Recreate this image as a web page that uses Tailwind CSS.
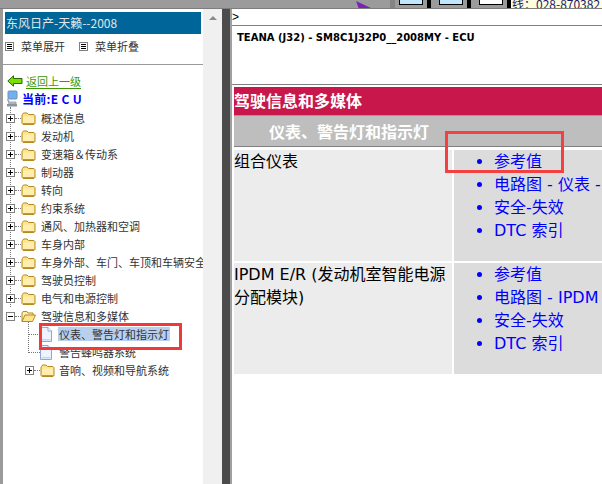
<!DOCTYPE html>
<html lang="zh-CN">
<head>
<meta charset="UTF-8">
<title>东风日产-天籁--2008</title>
<script src="https://cdn.jsdelivr.net/npm/@tailwindcss/browser@4"></script>
</head>
<body class="bg-white">
<svg class="hidden">
  <symbol id="folder" viewBox="0 0 15 13">
    <path d="M1.5 2.5 L2.5 1 H6 L7.5 2.5 H13 L14 3.5 V11.5 L13 12.5 H2 L1 11.5 V3 Z" fill="#ffe48a" stroke="#b58a22"/>
    <path d="M2 4.5 H13 V11 H2 Z" fill="#ffeeb0"/>
    <path d="M2 11.5 H13.5" stroke="#c8962a"/>
  </symbol>
  <symbol id="open" viewBox="0 0 15 13">
    <path d="M1 11.5 V3 L2 1.5 H6 L7 3 H12 V5" fill="#ffeeb0" stroke="#b58a22"/>
    <path d="M1 11.5 L4 5 H14.5 L11.5 11.5 Z" fill="#ffe48a" stroke="#b58a22"/>
  </symbol>
  <symbol id="doc" viewBox="0 0 12 15">
    <path d="M.5 .5 H8 L11.5 4 V14.5 H.5 Z" fill="#eef4ff" stroke="#8fa8d8"/>
    <path d="M8 .5 V4 H11.5" fill="#fff" stroke="#8fa8d8"/>
    <path d="M1.5 12 H10.5 V13.5 H1.5 Z" fill="#c4d6f4"/>
  </symbol>
  <symbol id="plus" viewBox="0 0 9 9">
    <rect x=".5" y=".5" width="8" height="8" fill="#fff" stroke="#808080"/>
    <path d="M2 4.5 H7 M4.5 2 V7" stroke="#000"/>
  </symbol>
  <symbol id="minus" viewBox="0 0 9 9">
    <rect x=".5" y=".5" width="8" height="8" fill="#fff" stroke="#808080"/>
    <path d="M2 4.5 H7" stroke="#000"/>
  </symbol>
  <symbol id="menu" viewBox="0 0 9 9">
    <rect x=".5" y=".5" width="8" height="8" fill="#fff" stroke="#808080"/>
    <path d="M2 2.5 H7 M2 4.5 H7 M2 6.5 H7" stroke="#000"/>
  </symbol>
</svg>

<div class="relative w-[602px] h-[484px] overflow-hidden flex flex-col font-['Noto_Sans_CJK_SC',sans-serif]">
  <!-- strip of the window behind -->
  <div class="h-[9px] shrink-0 bg-[#9b9b9b] border-b border-[#7d7d7d] flex overflow-hidden">
    <svg class="ml-[356px] mt-px w-[17px] h-[8px] shrink-0" viewBox="0 0 17 8"><path d="M0 0 L17 8 H3 Z" fill="#7a22b8"/></svg>
    <div class="ml-[17px] w-[5px] bg-[#848484] shrink-0"></div>
    <div class="ml-[4px] w-[24px] h-[5px] bg-[#bfe8ff] border-x border-b border-black shrink-0"></div>
    <div class="ml-[4px] w-[4px] bg-black shrink-0"></div>
    <div class="ml-[8px] w-[24px] h-[5px] bg-[#bfe8ff] border-x border-b border-black shrink-0"></div>
    <div class="ml-[4px] w-[4px] bg-black shrink-0"></div>
    <div class="ml-[8px] w-[24px] h-[5px] bg-white border-x border-b border-black shrink-0"></div>
    <div class="ml-[4px] w-[4px] bg-black shrink-0"></div>
    <div class="flex-1 bg-[#fffde0] text-[#1a1a6e] text-[12px] leading-[7px] whitespace-nowrap pl-px">线：028-870382</div>
  </div>

  <div class="flex flex-1 min-h-0">
    <div class="w-[3px] bg-[#9b9b9b] shrink-0"></div>

    <!-- left menu -->
    <div class="w-[200px] shrink-0 bg-white overflow-hidden text-[11px] text-[#333]">
      <div class="mt-[3px] ml-[2px] w-[196px] h-[22px] bg-[#006699] text-[#e4e4e4] text-[12px] leading-[22px] pl-px whitespace-nowrap">东风日产-天籁--2008</div>
      <div class="h-[31px] border-b border-[#999] flex items-center pl-[2px] pb-[6px]">
        <svg class="w-[9px] h-[9px] shrink-0"><use href="#menu"/></svg>
        <span class="ml-[7px] leading-none">菜单展开</span>
        <svg class="ml-[14px] w-[9px] h-[9px] shrink-0"><use href="#menu"/></svg>
        <span class="ml-[7px] leading-none">菜单折叠</span>
      </div>
      <div class="mt-[9px] h-[14px] flex items-center pl-[4px]">
        <svg class="w-[16px] h-[12px] shrink-0" viewBox="0 0 16 12"><path d="M.8 6 L6.5 .8 V3.5 H15 V8.5 H6.5 V11.2 Z" fill="#7be000" stroke="#2a6a00"/></svg>
        <span class="ml-[3px] text-[#3a9a00] underline underline-offset-2 leading-none">返回上一级</span>
      </div>
      <div class="mt-[2px] h-[17px] flex items-center pl-[3px]">
        <svg class="w-[12px] h-[17px] shrink-0" viewBox="0 0 12 17">
          <rect x="2" y="1" width="9" height="8" rx="1" fill="#6cb0f5" stroke="#7f8fa8"/>
          <path d="M1.5 9 L3.5 12 H10 V14 H3 Z" fill="#c4cad4" stroke="#7f8a98" stroke-width=".7"/>
          <rect x="1" y="14" width="10" height="2.5" fill="#8a93a0"/>
        </svg>
        <span class="ml-[4px] text-[12px] leading-none font-bold text-[#0000ff] tracking-[0.3px]">当前:E C U</span>
      </div>

      <!-- tree -->
      <div class="relative mt-[2px]">
        <div class="absolute left-[7px] -top-[2px] h-[200px] border-l border-dotted border-[#777]"></div>
        <div class="absolute left-[25px] top-[206px] h-[36px] border-l border-dotted border-[#777]"></div>

        <div class="relative h-[18px] flex items-center pl-[3px] whitespace-nowrap"><svg class="w-[9px] h-[9px] shrink-0"><use href="#plus"/></svg><span class="w-[6px] shrink-0 border-t border-dotted border-[#777]"></span><svg class="w-[15px] h-[13px] shrink-0"><use href="#folder"/></svg><span class="ml-[5px]">概述信息</span></div>
        <div class="relative h-[18px] flex items-center pl-[3px] whitespace-nowrap"><svg class="w-[9px] h-[9px] shrink-0"><use href="#plus"/></svg><span class="w-[6px] shrink-0 border-t border-dotted border-[#777]"></span><svg class="w-[15px] h-[13px] shrink-0"><use href="#folder"/></svg><span class="ml-[5px]">发动机</span></div>
        <div class="relative h-[18px] flex items-center pl-[3px] whitespace-nowrap"><svg class="w-[9px] h-[9px] shrink-0"><use href="#plus"/></svg><span class="w-[6px] shrink-0 border-t border-dotted border-[#777]"></span><svg class="w-[15px] h-[13px] shrink-0"><use href="#folder"/></svg><span class="ml-[5px]">变速箱＆传动系</span></div>
        <div class="relative h-[18px] flex items-center pl-[3px] whitespace-nowrap"><svg class="w-[9px] h-[9px] shrink-0"><use href="#plus"/></svg><span class="w-[6px] shrink-0 border-t border-dotted border-[#777]"></span><svg class="w-[15px] h-[13px] shrink-0"><use href="#folder"/></svg><span class="ml-[5px]">制动器</span></div>
        <div class="relative h-[18px] flex items-center pl-[3px] whitespace-nowrap"><svg class="w-[9px] h-[9px] shrink-0"><use href="#plus"/></svg><span class="w-[6px] shrink-0 border-t border-dotted border-[#777]"></span><svg class="w-[15px] h-[13px] shrink-0"><use href="#folder"/></svg><span class="ml-[5px]">转向</span></div>
        <div class="relative h-[18px] flex items-center pl-[3px] whitespace-nowrap"><svg class="w-[9px] h-[9px] shrink-0"><use href="#plus"/></svg><span class="w-[6px] shrink-0 border-t border-dotted border-[#777]"></span><svg class="w-[15px] h-[13px] shrink-0"><use href="#folder"/></svg><span class="ml-[5px]">约束系统</span></div>
        <div class="relative h-[18px] flex items-center pl-[3px] whitespace-nowrap"><svg class="w-[9px] h-[9px] shrink-0"><use href="#plus"/></svg><span class="w-[6px] shrink-0 border-t border-dotted border-[#777]"></span><svg class="w-[15px] h-[13px] shrink-0"><use href="#folder"/></svg><span class="ml-[5px]">通风、加热器和空调</span></div>
        <div class="relative h-[18px] flex items-center pl-[3px] whitespace-nowrap"><svg class="w-[9px] h-[9px] shrink-0"><use href="#plus"/></svg><span class="w-[6px] shrink-0 border-t border-dotted border-[#777]"></span><svg class="w-[15px] h-[13px] shrink-0"><use href="#folder"/></svg><span class="ml-[5px]">车身内部</span></div>
        <div class="relative h-[18px] flex items-center pl-[3px] whitespace-nowrap"><svg class="w-[9px] h-[9px] shrink-0"><use href="#plus"/></svg><span class="w-[6px] shrink-0 border-t border-dotted border-[#777]"></span><svg class="w-[15px] h-[13px] shrink-0"><use href="#folder"/></svg><span class="ml-[5px]">车身外部、车门、车顶和车辆安全</span></div>
        <div class="relative h-[18px] flex items-center pl-[3px] whitespace-nowrap"><svg class="w-[9px] h-[9px] shrink-0"><use href="#plus"/></svg><span class="w-[6px] shrink-0 border-t border-dotted border-[#777]"></span><svg class="w-[15px] h-[13px] shrink-0"><use href="#folder"/></svg><span class="ml-[5px]">驾驶员控制</span></div>
        <div class="relative h-[18px] flex items-center pl-[3px] whitespace-nowrap"><svg class="w-[9px] h-[9px] shrink-0"><use href="#plus"/></svg><span class="w-[6px] shrink-0 border-t border-dotted border-[#777]"></span><svg class="w-[15px] h-[13px] shrink-0"><use href="#folder"/></svg><span class="ml-[5px]">电气和电源控制</span></div>
        <div class="relative h-[18px] flex items-center pl-[3px] whitespace-nowrap"><svg class="w-[9px] h-[9px] shrink-0"><use href="#minus"/></svg><span class="w-[6px] shrink-0 border-t border-dotted border-[#777]"></span><svg class="w-[15px] h-[13px] shrink-0"><use href="#open"/></svg><span class="ml-[5px]">驾驶信息和多媒体</span></div>

        <div class="relative h-[18px] flex items-center pl-[25px] whitespace-nowrap"><span class="w-[12px] shrink-0 border-t border-dotted border-[#777]"></span><svg class="w-[12px] h-[15px] shrink-0"><use href="#doc"/></svg><span class="ml-[6px] bg-[#b8d0ee] px-px leading-[14px]">仪表、警告灯和指示灯</span></div>
        <div class="relative h-[18px] flex items-center pl-[25px] whitespace-nowrap"><span class="w-[12px] shrink-0 border-t border-dotted border-[#777]"></span><svg class="w-[12px] h-[15px] shrink-0"><use href="#doc"/></svg><span class="ml-[7px]">警告蜂鸣器系统</span></div>
        <div class="relative h-[18px] flex items-center pl-[22px] whitespace-nowrap"><svg class="w-[9px] h-[9px] shrink-0"><use href="#plus"/></svg><span class="w-[6px] shrink-0 border-t border-dotted border-[#777]"></span><svg class="w-[15px] h-[13px] shrink-0"><use href="#folder"/></svg><span class="ml-[4px]">音响、视频和导航系统</span></div>
      </div>
    </div>

    <!-- scrollbar -->
    <div class="w-[19px] shrink-0 bg-[#f0f0f0] flex justify-center pt-[7px]">
      <div class="w-0 h-0 border-x-[4px] border-x-transparent border-b-[4px] border-b-[#8a8a8a]"></div>
    </div>
    <div class="w-[8px] shrink-0 bg-[#4c4c4c]"></div>
    <div class="w-[2px] shrink-0 bg-[#a0a0a0]"></div>

    <!-- right frame -->
    <div class="flex-1 min-w-0 bg-white overflow-hidden">
      <div class="h-[17px] border-b border-[#808080] text-[12px] leading-[16px] text-black font-['Liberation_Sans']">&gt;</div>
      <div class="h-[59px] border-b border-[#808080] pl-[5px] pt-[5px] text-[10px] leading-[14px] font-bold text-black whitespace-nowrap font-['DejaVu_Sans']">TEANA (J32) - SM8C1J32P0__2008MY - ECU</div>
      <div class="mt-[2px] ml-[2px] h-[29px] bg-[#c8174a] text-white text-[16px] font-bold leading-[27px] border-b border-[#999]">驾驶信息和多媒体</div>
      <div class="ml-[2px] h-[31px] bg-[#bebebe] border-b border-[#808080] text-white text-[16px] font-bold leading-[30px] pl-[35px]">仪表、警告灯和指示灯</div>

      <div class="mt-[3px] ml-[2px] flex flex-col gap-[2px] text-[16px] font-['DejaVu_Sans','Noto_Sans_CJK_SC',sans-serif]">
        <div class="flex gap-[2px] h-[111px]">
          <div class="w-[218px] shrink-0 bg-[#ececec] text-black leading-[23px]">组合仪表</div>
          <ul class="w-[200px] shrink-0 bg-[#dcdcdc] pl-[40px] list-disc leading-[23px] text-[#0000ff] whitespace-nowrap">
            <li><a class="text-[#0000ff]" href="#">参考值</a></li>
            <li><a class="text-[#0000ff]" href="#">电路图 - 仪表 - 组合仪表</a></li>
            <li><a class="text-[#0000ff]" href="#">安全-失效</a></li>
            <li><a class="text-[#0000ff]" href="#">DTC 索引</a></li>
          </ul>
        </div>
        <div class="flex gap-[2px] h-[111px]">
          <div class="w-[218px] shrink-0 bg-[#ececec] text-black leading-[23px]">IPDM E/R (发动机室智能电源分配模块)</div>
          <ul class="w-[200px] shrink-0 bg-[#dcdcdc] pl-[40px] list-disc leading-[23px] text-[#0000ff] whitespace-nowrap">
            <li><a class="text-[#0000ff]" href="#">参考值</a></li>
            <li><a class="text-[#0000ff]" href="#">电路图 - IPDM E/R</a></li>
            <li><a class="text-[#0000ff]" href="#">安全-失效</a></li>
            <li><a class="text-[#0000ff]" href="#">DTC 索引</a></li>
          </ul>
        </div>
      </div>
    </div>
  </div>

  <!-- red annotation boxes -->
  <div class="absolute left-[445px] top-[131px] w-[119px] h-[42px] border-[3px] border-[#f44040]"></div>
  <div class="absolute left-[39px] top-[323px] w-[143px] h-[27px] border-[3px] border-[#f03a3a]"></div>
</div>
</body>
</html>
